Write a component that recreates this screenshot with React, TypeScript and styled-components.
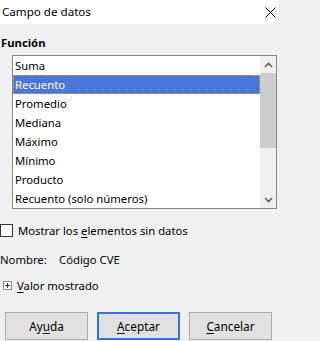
import { createGlobalStyle } from "styled-components";
import styled from "styled-components";

const GlobalStyle = createGlobalStyle`
  html, body {
    margin: 0;
    padding: 0;
    background: #f0f0f0;
  }
  body {
    font-family: "Noto Sans", "Open Sans", sans-serif;
    font-size: 11.3px;
    color: #000;
  }
`;

const Window = styled.div`
  width: 278px;
  height: 341px;
  display: flex;
  flex-direction: column;
  overflow: hidden;
  background: #f0f0f0;
`;

const TitleBar = styled.div`
  height: 24px;
  flex: none;
  background: #fff;
  display: flex;
  align-items: center;
  justify-content: space-between;
  padding: 0 2px 0 2px;
  box-sizing: border-box;
`;

const Title = styled.span`
  font-size: 11.6px;
  line-height: 16px;
`;

const Heading = styled.div`
  margin-top: 10px;
  height: 17px;
  line-height: 17px;
  font-weight: 700;
  padding-left: 1px;
`;

const ListBox = styled.div`
  margin: 4px 0 0 12px;
  width: 265px;
  height: 154px;
  box-sizing: border-box;
  border: 1px solid #828790;
  background: #fff;
  display: flex;
`;

const Items = styled.div`
  flex: 1;
  display: flex;
  flex-direction: column;
`;

const Item = styled.div<{ $selected?: boolean }>`
  height: 19px;
  line-height: 19px;
  padding-left: 2px;
  box-sizing: border-box;
  white-space: nowrap;
  background: ${(p) => (p.$selected ? "#4a77d5" : "transparent")};
  color: ${(p) => (p.$selected ? "#fff" : "#000")};
  outline: ${(p) => (p.$selected ? "1px dotted #e8a050" : "none")};
  outline-offset: -1px;
`;

const ScrollBar = styled.div`
  width: 16px;
  flex: none;
  background: #f0f0f0;
  display: flex;
  flex-direction: column;
`;

const Arrow = styled.div`
  height: 17px;
  display: flex;
  align-items: center;
  justify-content: center;
`;

const Thumb = styled.div`
  height: 75px;
  background: #cdcdcd;
`;

const Track = styled.div`
  flex: 1;
`;

const Row = styled.div<{ $top: number }>`
  margin-top: ${(p) => p.$top}px;
  height: 18px;
  display: flex;
  align-items: center;
  white-space: nowrap;
`;

const CheckBox = styled.span`
  width: 13px;
  height: 13px;
  box-sizing: border-box;
  border: 1px solid #333;
  background: #fff;
  margin-right: 5px;
`;

const Label = styled.span<{ $width?: number }>`
  width: ${(p) => (p.$width ? `${p.$width}px` : "auto")};
`;

const Expander = styled.span`
  width: 9px;
  height: 9px;
  box-sizing: border-box;
  border: 1px solid #919191;
  margin: 0 5px 0 3px;
  display: flex;
  align-items: center;
  justify-content: center;
  background: #fff;
`;

const Key = styled.span`
  text-decoration: underline;
  text-underline-offset: 2px;
`;

const Buttons = styled.div`
  margin: 18px 0 0 5px;
  display: flex;
  gap: 9px;
`;

const Button = styled.div<{ $default?: boolean }>`
  width: 83px;
  height: 28px;
  box-sizing: border-box;
  background: #e1e1e1;
  border: ${(p) => (p.$default ? "2px solid #3c6fd7" : "1px solid #adadad")};
  display: flex;
  align-items: center;
  justify-content: center;
  font-size: 11.8px;
`;

const items = [
  "Suma",
  "Recuento",
  "Promedio",
  "Mediana",
  "Máximo",
  "Mínimo",
  "Producto",
  "Recuento (solo números)",
];

function Chevron({ up }: { up?: boolean }) {
  return (
    <svg width="9" height="6" viewBox="0 0 9 6">
      <path
        d={up ? "M1 5 L4.5 1.5 L8 5" : "M1 1 L4.5 4.5 L8 1"}
        fill="none"
        stroke="#606060"
        strokeWidth="1.6"
      />
    </svg>
  );
}

export default function App() {
  return (
    <Window>
      <GlobalStyle />
      <TitleBar>
        <Title>Campo de datos</Title>
        <svg width="11" height="11" viewBox="0 0 11 11">
          <path d="M0.5 0.5 L10.5 10.5 M10.5 0.5 L0.5 10.5" stroke="#000" strokeWidth="1" />
        </svg>
      </TitleBar>
      <Heading>Función</Heading>
      <ListBox>
        <Items>
          {items.map((it, i) => (
            <Item key={it} $selected={i === 1}>
              {it}
            </Item>
          ))}
        </Items>
        <ScrollBar>
          <Arrow>
            <Chevron up />
          </Arrow>
          <Thumb />
          <Track />
          <Arrow>
            <Chevron />
          </Arrow>
        </ScrollBar>
      </ListBox>
      <Row $top={12}>
        <CheckBox />
        <span>
          Mostrar los <Key>e</Key>lementos sin datos
        </span>
      </Row>
      <Row $top={11}>
        <Label $width={59}>Nombre:</Label>
        <Label>Código CVE</Label>
      </Row>
      <Row $top={8}>
        <Expander>
          <svg width="7" height="7" viewBox="0 0 7 7">
            <path d="M1 3.5 H6 M3.5 1 V6" stroke="#333" strokeWidth="1" />
          </svg>
        </Expander>
        <span>
          <Key>V</Key>alor mostrado
        </span>
      </Row>
      <Buttons>
        <Button>
          <span>
            Ay<Key>u</Key>da
          </span>
        </Button>
        <Button $default>
          <span>
            <Key>A</Key>ceptar
          </span>
        </Button>
        <Button>
          <span>
            <Key>C</Key>ancelar
          </span>
        </Button>
      </Buttons>
    </Window>
  );
}
